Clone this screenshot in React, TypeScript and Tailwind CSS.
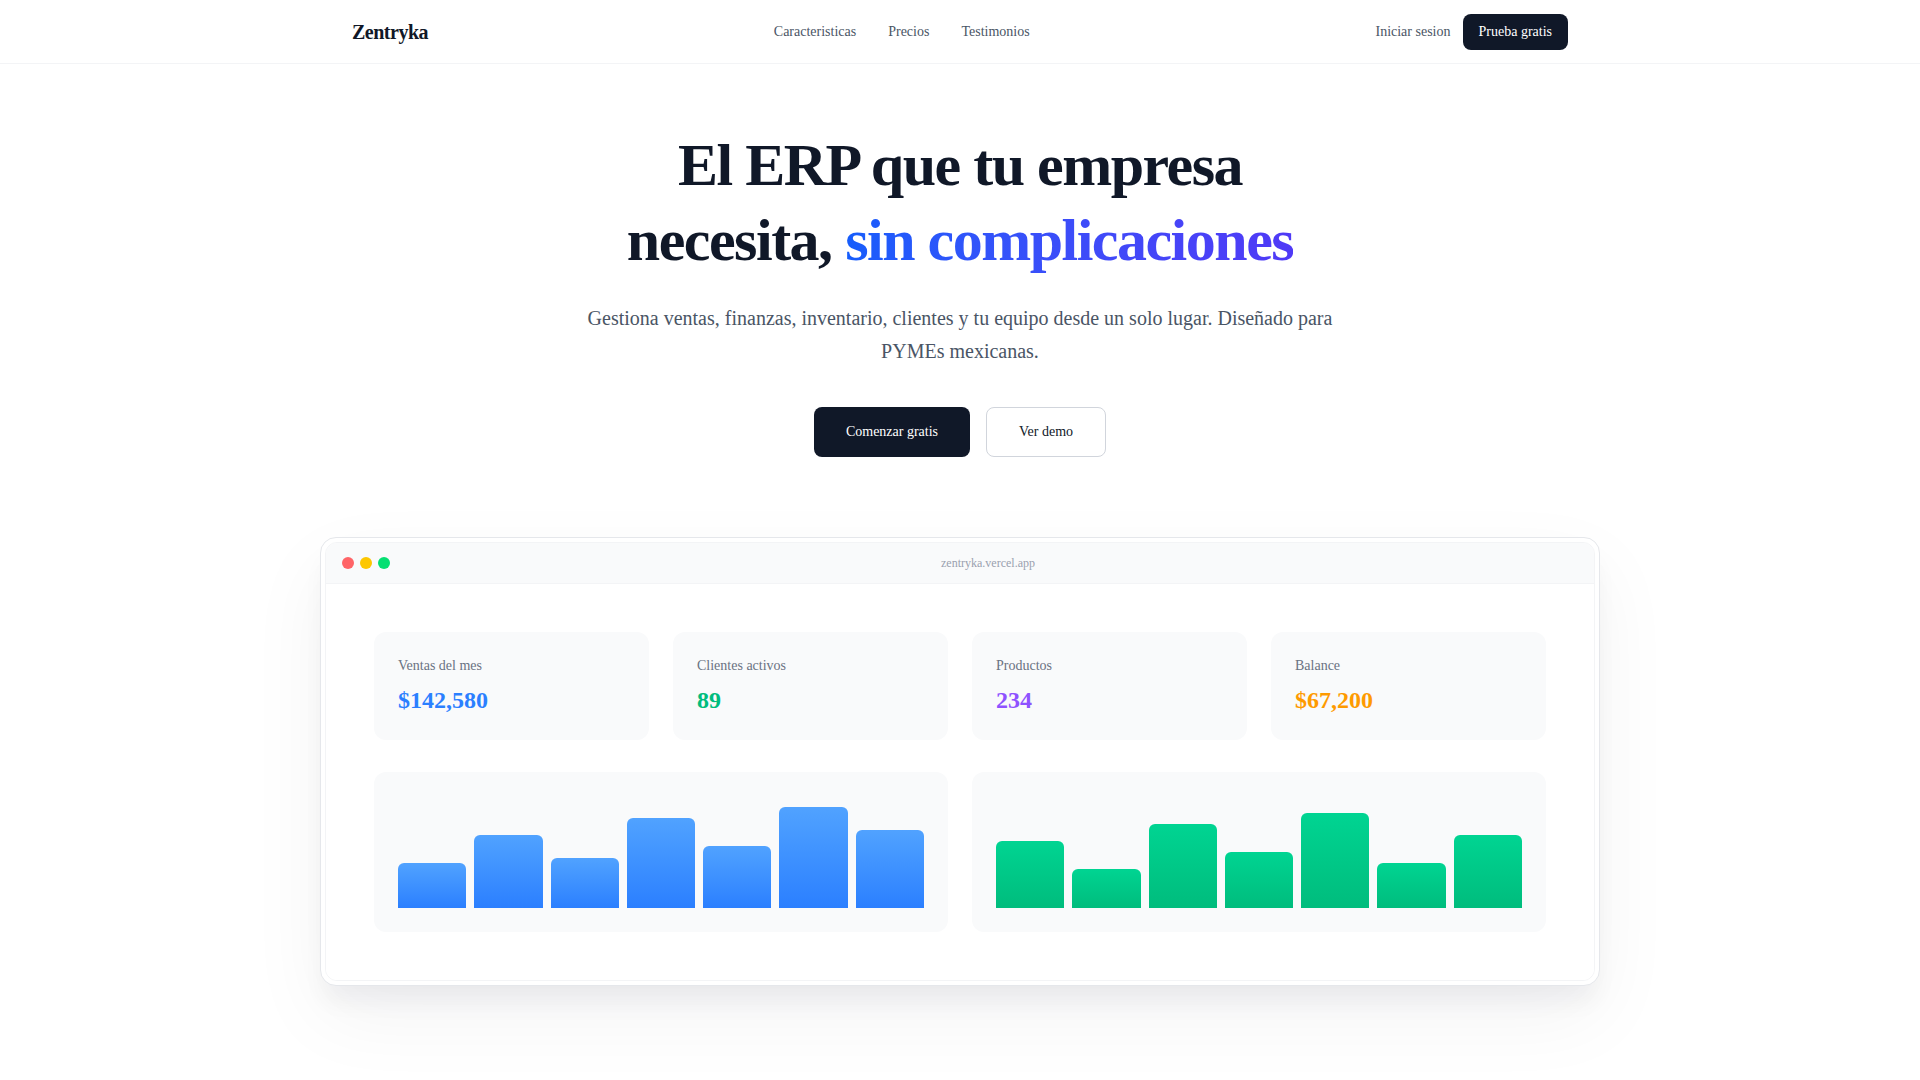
import React from "react";

const stats = [
  { label: "Ventas del mes", value: "$142,580", color: "text-blue-500" },
  { label: "Clientes activos", value: "89", color: "text-emerald-500" },
  { label: "Productos", value: "234", color: "text-violet-500" },
  { label: "Balance", value: "$67,200", color: "text-amber-500" },
];

const blueBars = [40, 65, 45, 80, 55, 90, 70];
const greenBars = [60, 35, 75, 50, 85, 40, 65];

const Navbar = () => {
  return (
    <header className="h-16 border-b border-gray-100 bg-white">
      <div className="mx-auto flex h-full max-w-7xl items-center justify-between px-8">
        <span className="text-xl font-bold tracking-tight text-gray-900">Zentryka</span>
        <nav className="flex items-center gap-8 text-sm text-gray-600">
          <a href="#">Caracteristicas</a>
          <a href="#">Precios</a>
          <a href="#">Testimonios</a>
        </nav>
        <div className="flex items-center gap-3">
          <a href="#" className="text-sm text-gray-600">
            Iniciar sesion
          </a>
          <button className="rounded-lg bg-gray-900 px-4 py-2 text-sm text-white">
            Prueba gratis
          </button>
        </div>
      </div>
    </header>
  );
};

const BarChart = ({ data, bar }: { data: number[]; bar: string }) => {
  return (
    <div className="rounded-xl bg-gray-50 p-6">
      <div className="flex h-28 items-end gap-2">
        {data.map((h, i) => (
          <div
            key={i}
            className={`flex-1 rounded-t-md ${bar}`}
            style={{ height: `${h}%` }}
          />
        ))}
      </div>
    </div>
  );
};

const DashboardPreview = () => {
  return (
    <div className="mx-auto mt-20 max-w-[1280px] rounded-2xl border border-gray-200 bg-white p-1 shadow-[0_20px_25px_-5px_rgba(15,23,42,0.05),0_30px_80px_rgba(15,23,42,0.05)]">
      <div className="overflow-hidden rounded-xl border border-gray-100">
        <div className="flex items-center border-b border-gray-100 bg-gray-50 px-4 py-3">
          <div className="flex gap-1.5">
            <span className="h-3 w-3 rounded-full bg-red-400" />
            <span className="h-3 w-3 rounded-full bg-yellow-400" />
            <span className="h-3 w-3 rounded-full bg-green-400" />
          </div>
          <div className="ml-2 flex-1 text-center text-xs leading-4 text-gray-400">
            zentryka.vercel.app
          </div>
        </div>
        <div className="bg-white p-12">
          <div className="grid grid-cols-4 gap-6">
            {stats.map((s) => (
              <div key={s.label} className="rounded-xl bg-gray-50 p-6">
                <p className="text-sm text-gray-500">{s.label}</p>
                <p className={`mt-2 text-2xl font-bold ${s.color}`}>{s.value}</p>
              </div>
            ))}
          </div>
          <div className="mt-8 grid grid-cols-2 gap-6">
            <BarChart
              data={blueBars}
              bar="bg-gradient-to-t from-blue-500 to-blue-400"
            />
            <BarChart
              data={greenBars}
              bar="bg-gradient-to-t from-emerald-500 to-emerald-400"
            />
          </div>
        </div>
      </div>
    </div>
  );
};

export default function App() {
  return (
    <div className="min-h-screen bg-white font-['Liberation_Serif','Times_New_Roman',serif] text-gray-900">
      <Navbar />
      <main className="px-8 pt-16 pb-24">
        <section className="text-center">
          <h1 className="mx-auto max-w-4xl text-6xl leading-tight font-bold tracking-tight text-gray-900">
            El ERP que tu empresa
            <br />
            necesita,{" "}
            <span className="bg-gradient-to-r from-blue-600 to-indigo-600 bg-clip-text text-transparent">
              sin complicaciones
            </span>
          </h1>
          <p className="mx-auto mt-6 max-w-3xl text-xl leading-relaxed text-gray-600">
            Gestiona ventas, finanzas, inventario, clientes y tu equipo desde un
            solo lugar. Diseñado para PYMEs mexicanas.
          </p>
          <div className="mt-10 flex justify-center gap-4">
            <button className="rounded-lg bg-gray-900 px-8 py-3.5 text-sm text-white">
              Comenzar gratis
            </button>
            <button className="rounded-lg border border-gray-300 bg-white px-8 py-3.5 text-sm text-gray-900">
              Ver demo
            </button>
          </div>
        </section>
        <DashboardPreview />
      </main>
    </div>
  );
}
